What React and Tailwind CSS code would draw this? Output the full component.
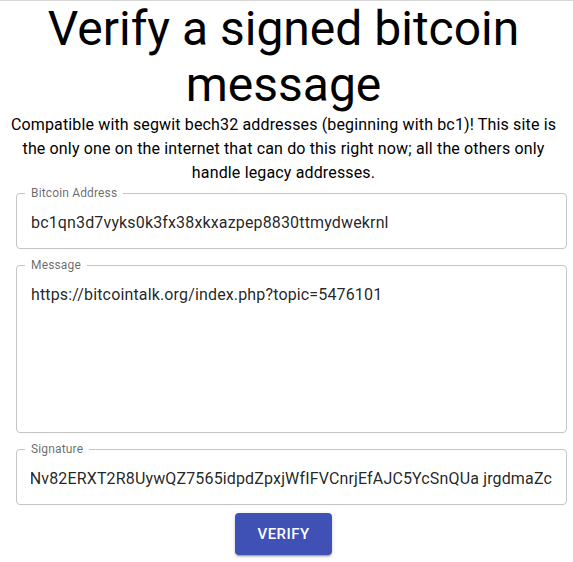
import React from 'react';

const SIGNATURE =
  'H3kq9Lm0TbXvRgWzA1sPdYfE6uJuNv82ERXT2R8UywQZ7565idpdZpxjWfIFVCnrjEfAJC5YcSnQUa jrgdmaZc';

const OutlinedField = ({ label, className = '', children }) => (
  <div className={`relative rounded-[4px] border border-[#c4c4c4] ${className}`}>
    <span className="absolute left-[8px] top-[-8px] bg-white px-[6px] text-[12px] leading-[14px] tracking-[0.15px] text-[rgba(0,0,0,0.6)]">
      {label}
    </span>
    {children}
  </div>
);

const App = () => {
  return (
    <div className="min-h-[562px] w-[573px] border-t border-[#d6d6d6] bg-white font-['Roboto',sans-serif] text-[rgba(0,0,0,0.87)]">
      <div className="w-[567px]">
        <h1 className="text-center text-[48px] font-normal leading-[56px] text-black">
          Verify a signed bitcoin message
        </h1>
        <p className="px-2 text-center text-[16px] leading-[24px] tracking-[0.15px] text-black">
          Compatible with segwit bech32 addresses (beginning with bc1)! This site is the only one on the
          internet that can do this right now; all the others only handle legacy addresses.
        </p>

        <div className="ml-4 flex flex-col text-[16px] leading-[23px] tracking-[0.15px]">
          <OutlinedField label="Bitcoin Address" className="mt-2 h-[56px]">
            <div className="px-[14px] py-[16.5px]">bc1qn3d7vyks0k3fx38xkxazpep8830ttmydwekrnl</div>
          </OutlinedField>

          <OutlinedField label="Message" className="mt-4 h-[168px]">
            <div className="px-[14px] py-[16.5px]">https://bitcointalk.org/index.php?topic=5476101</div>
          </OutlinedField>

          <OutlinedField label="Signature" className="mt-4 h-[56px]">
            <div className="mx-[14px] flex justify-end overflow-hidden py-[16.5px]">
              <span className="whitespace-pre">{SIGNATURE}</span>
            </div>
          </OutlinedField>
        </div>

        <div className="mt-2 flex justify-center">
          <button className="rounded-[4px] bg-[#3f51b5] px-[22px] py-[8px] text-[15px] font-medium uppercase leading-[26px] tracking-[0.46px] text-white shadow-[0px_3px_1px_-2px_rgba(0,0,0,0.2),0px_2px_2px_0px_rgba(0,0,0,0.14),0px_1px_5px_0px_rgba(0,0,0,0.12)]">
            Verify
          </button>
        </div>
      </div>
    </div>
  );
};

export default App;
